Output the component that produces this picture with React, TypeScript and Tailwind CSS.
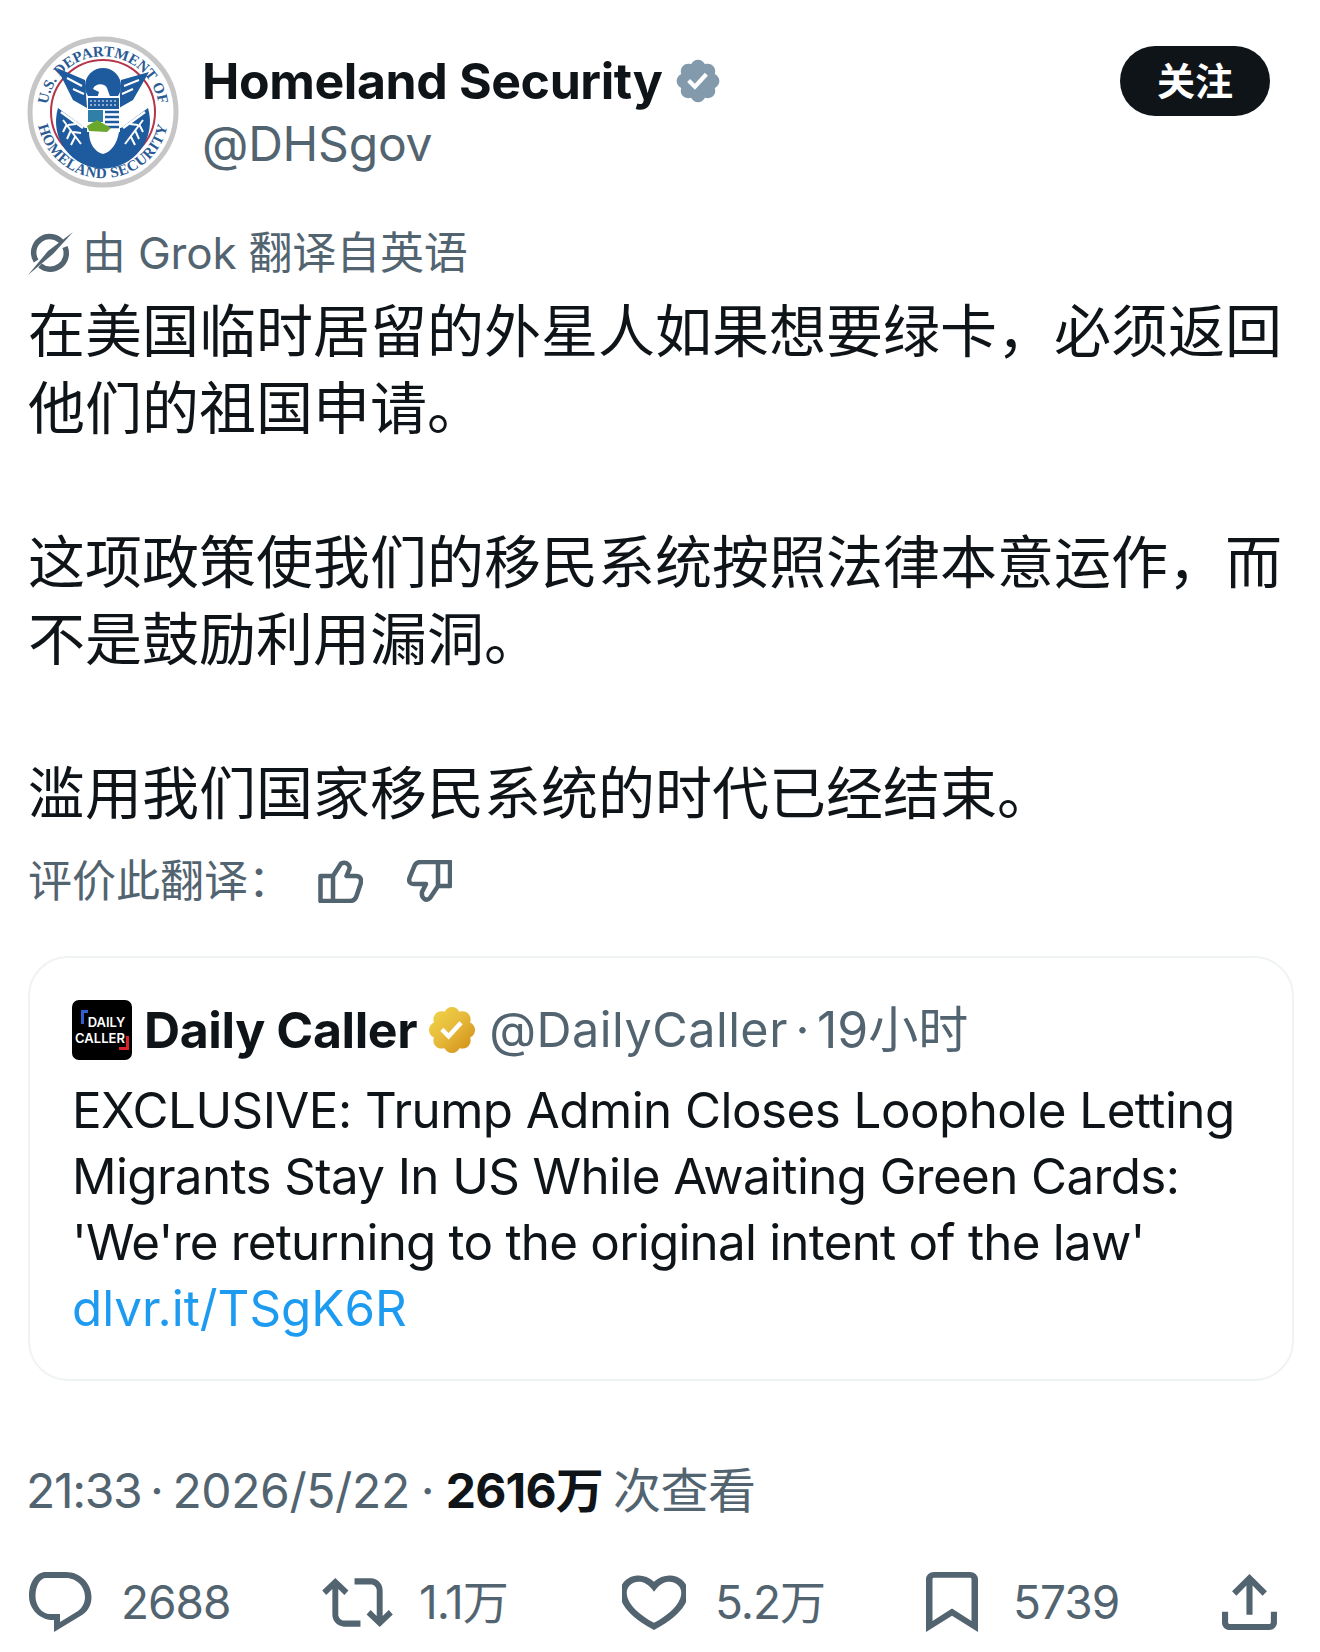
import React from "react";

const sans = "font-['Inter','Noto_Sans_CJK_SC',sans-serif]";

const P = {
  rt: "M4.5 3.88l4.432 4.14-1.364 1.46L5.5 7.55V16c0 1.1.896 2 2 2H13v2H7.5c-2.209 0-4-1.79-4-4V7.55L1.432 9.48.068 8.02 4.5 3.88zM16.5 6H11V4h5.5c2.209 0 4 1.79 4 4v8.45l2.068-1.93 1.364 1.46-4.432 4.14-4.432-4.14 1.364-1.46 2.068 1.93V8c0-1.1-.896-2-2-2z",
  like: "M16.697 5.5c-1.222-.06-2.679.51-3.89 2.16l-.805 1.09-.806-1.09C9.984 6.01 8.526 5.44 7.304 5.5c-1.243.07-2.349.78-2.91 1.91-.552 1.12-.633 2.78.479 4.82 1.074 1.97 3.257 4.27 7.129 6.61 3.87-2.34 6.052-4.64 7.126-6.61 1.111-2.04 1.03-3.7.477-4.82-.561-1.13-1.666-1.84-2.908-1.91zm4.187 7.69c-1.351 2.48-4.001 5.12-8.379 7.67l-.503.3-.504-.3c-4.379-2.55-7.029-5.19-8.382-7.67-1.36-2.5-1.41-4.86-.514-6.67.887-1.79 2.647-2.91 4.601-3.01 1.651-.09 3.368.56 4.798 2.01 1.429-1.45 3.146-2.1 4.796-2.01 1.954.1 3.714 1.22 4.601 3.01.896 1.81.846 4.17-.514 6.67z",
  mark: "M4 4.5C4 3.12 5.119 2 6.5 2h11C18.881 2 20 3.12 20 4.5v18.44l-8-5.71-8 5.71V4.5zM6.5 4c-.276 0-.5.22-.5.5v14.56l6-4.29 6 4.29V4.5c0-.28-.224-.5-.5-.5h-11z",
  share: "M12 2.59l5.7 5.7-1.41 1.42L13 6.41V16h-2V6.41l-3.3 3.3-1.41-1.42L12 2.59zM21 15l-.02 3.51c0 1.38-1.12 2.49-2.5 2.49H5.5C4.11 21 3 19.88 3 18.5V15h2v3.5c0 .28.22.5.5.5h12.98c.28 0 .5-.22.5-.5L19 15h2z",
  badge: "M22.25 12c0-1.43-.88-2.67-2.19-3.34.46-1.39.2-2.9-.81-3.91s-2.52-1.27-3.91-.81c-.66-1.31-1.91-2.19-3.34-2.19s-2.67.88-3.33 2.19c-1.4-.46-2.91-.2-3.92.81s-1.26 2.52-.8 3.91c-1.31.67-2.2 1.91-2.2 3.34s.89 2.67 2.2 3.34c-.46 1.39-.21 2.9.8 3.91s2.52 1.26 3.91.81c.67 1.31 1.91 2.19 3.34 2.19s2.68-.88 3.34-2.19c1.39.45 2.9.2 3.91-.81s1.27-2.52.81-3.91c1.31-.67 2.19-1.91 2.19-3.34zm-11.71 4.2L6.8 12.46l1.41-1.42 2.26 2.26 4.8-5.23 1.47 1.36-6.2 6.77z",
};

function Icon({ d, vb, className }: { d: string; vb: string; className: string }) {
  return (
    <svg viewBox={vb} preserveAspectRatio="none" className={`${className} text-[#536471] shrink-0`} fill="currentColor">
      <path d={d} fillRule="evenodd" />
    </svg>
  );
}

function Seal() {
  const blue = "#1d5a9e";
  return (
    <svg viewBox="0 0 152 152" className="w-[152px] h-[152px] shrink-0 -ml-[1px]">
      <defs>
        <path id="sealTop" d="M 20.5 83.8 A 56 56 0 1 1 131.5 83.8" />
        <path id="sealBot" d="M 10.6 85 A 66 66 0 0 0 141.4 85" />
      </defs>
      <circle cx="76" cy="76" r="73" fill="#fff" stroke="#c6c6c6" strokeWidth="5" />
      <circle cx="76" cy="76" r="52" fill="#fff" stroke="#b5354a" strokeWidth="2" />
      <text fontFamily="'Liberation Serif',serif" fontSize="15" fill="#2a5a94" fontWeight="700">
        <textPath href="#sealTop" startOffset="50%" textAnchor="middle">U.S. DEPARTMENT OF</textPath>
      </text>
      <text fontFamily="'Liberation Serif',serif" fontSize="15" fill="#2a5a94" fontWeight="700">
        <textPath href="#sealBot" startOffset="50%" textAnchor="middle" letterSpacing="0.5">HOMELAND SECURITY</textPath>
      </text>
      <path d="M31 72 L58 92 L94 92 L121 72 A47 47 0 1 1 31 72 Z" fill={blue} />
      <path d="M30 32 L58 44 L60 72 L46 64 Z M122 36 L94 44 L92 72 L106 64 Z" fill={blue} />
      <circle cx="76" cy="50" r="18" fill={blue} />
      <path d="M40 42 L55 50 M46 53 L57 58 M112 44 L97 50 M106 53 L95 58" stroke="#fff" strokeWidth="2" />
      <path d="M66 53 C68 47 78 47 80 52 L85 66 L69 66 L72 56 Z" fill="#fff" />
      <rect x="60" y="60" width="33" height="36" fill="#fff" />
      <rect x="61" y="62" width="31" height="11" fill={blue} />
      <path d="M63 65 H90 M63 69 H90" stroke="#fff" strokeWidth="1" strokeDasharray="2 2" />
      <path d="M61 74 H76 V86 L61 86 Z" fill="#2f7fa8" />
      <path d="M78 76 H92 M78 81 H92 M78 86 H92 M78 91 H92" stroke={blue} strokeWidth="2.5" />
      <path d="M60 90 L70 84 L84 92 L80 96 L62 95 Z" fill="#6aa82c" />
      <path d="M62 96 L92 96 C90 108 84 116 76 118 C68 116 62 108 62 96 Z" fill="#fff" />
      <path d="M36 84 L54 108 M40 88 L36 96 M44 94 L40 103 M48 101 L44 109 M41 89 L49 88 M46 96 L54 97 M116 84 L98 108 M112 88 L116 96 M108 94 L112 103 M104 101 L108 109 M111 89 L103 88" stroke="#fff" strokeWidth="2" />
      <path d="M34 76 L56 92 M118 76 L96 92" stroke="#fff" strokeWidth="2.5" />
    </svg>
  );
}

function GoldBadge() {
  return (
    <svg viewBox="0 0 24 24" className="w-[54px] h-[54px] shrink-0">
      <defs>
        <linearGradient id="gold" x1="0" y1="0" x2="1" y2="1">
          <stop offset="0" stopColor="#f2d84a" />
          <stop offset="0.5" stopColor="#e6b83a" />
          <stop offset="1" stopColor="#cd8a10" />
        </linearGradient>
      </defs>
      <path d={P.badge} fill="url(#gold)" />
    </svg>
  );
}

function Grok() {
  return (
    <svg viewBox="0 0 50 46" className="w-[50px] h-[46px] shrink-0" fill="none" stroke="#536471">
      <path d="M37.3 12.7 A16 16 0 0 0 11.1 31" strokeWidth="5.5" />
      <path d="M15 35.5 A16 16 0 0 0 40 17" strokeWidth="5.5" />
      <path d="M48 2 L28 24 L3 45 L23 21 Z" fill="#536471" stroke="none" />
    </svg>
  );
}

function DailyCaller() {
  return (
    <div className="relative w-[60px] h-[60px] shrink-0 bg-black rounded-[7px] flex flex-col items-center justify-center text-white font-['Inter',sans-serif] font-semibold text-[13px] leading-[16px]">
      <span className="absolute left-[9px] top-[10px] w-[7px] h-[14px] border-l-[3px] border-t-[3px] border-[#2f5fd0]" />
      <span className="absolute right-[3px] bottom-[10px] w-[10px] h-[14px] border-r-[3px] border-b-[3px] border-[#d8232a]" />
      <span className="relative pl-[9px]">DAILY</span>
      <span className="relative pr-[4px]">CALLER</span>
    </div>
  );
}

const numCls = "text-[46px] leading-[60px] text-[#536471] tracking-[-1px]";

export default function App() {
  return (
    <div className={`w-[1320px] h-[1652px] overflow-hidden bg-white text-[#0f1419] ${sans} pl-[28px] pr-[26px] pt-[36px]`}>
      <div className="flex items-start">
        <Seal />
        <div className="ml-[23px] flex-1 pt-[14px]">
          <div className="flex items-center h-[62px]">
            <span className="text-[50px] leading-[62px] font-bold tracking-[-0.4px]">Homeland Security</span>
            <span className="ml-[10px] flex">
              <svg viewBox="0 0 24 24" className="w-[50px] h-[50px] text-[#829aab]" fill="currentColor"><path d={P.badge} /></svg>
            </span>
          </div>
          <div className="text-[48px] leading-[62px] mt-[1px] text-[#536471] tracking-[-0.2px]">@DHSgov</div>
        </div>
        <div className="mt-[10px] mr-[24px] w-[150px] h-[70px] rounded-full bg-[#0f1419] text-white flex items-center justify-center text-[38px] font-bold">关注</div>
      </div>

      <div className="mt-[39px] flex items-center h-[52px] text-[44px] text-[#536471] gap-[7px] -ml-[3px]">
        <Grok />
        <span className="leading-[52px] tracking-[-0.2px]">由 Grok 翻译自英语</span>
      </div>

      <div className="mt-[14px] text-[57px] leading-[77px] whitespace-pre-line">
        {"在美国临时居留的外星人如果想要绿卡，必须返回\n他们的祖国申请。\n\n这项政策使我们的移民系统按照法律本意运作，而\n不是鼓励利用漏洞。\n\n滥用我们国家移民系统的时代已经结束。"}
      </div>

      <div className="mt-[19px] flex items-center h-[60px] text-[#536471]">
        <span className="text-[44px] leading-[60px] w-[290px]">评价此翻译：</span>
        <svg viewBox="0 0 45 43" className="w-[45px] h-[43px]" fill="none" stroke="currentColor" strokeWidth="4.5" strokeLinejoin="round">
          <path d="M2.5 16 H15 V41 H2.5 Z M15 16 L23 3.5 C29 1 33 6 31 10 L28.5 16 H38 C42 16 44 19 42.5 24 L38.5 36 C37.5 39 35 41 32 41 H15" />
        </svg>
        <svg viewBox="0 0 45 43" className="w-[45px] h-[43px] ml-[44px]" fill="none" stroke="currentColor" strokeWidth="4.5" strokeLinejoin="round">
          <path d="M43 2 H31 V26 H43 Z M31 2 H14 C10 2 8 4 7 7 L2.5 18 C1.5 22 3 24 7 24 H19 L15 32 C14 38 19 42 23 38 L31 26" />
        </svg>
      </div>

      <div className="mt-[45px] h-[425px] border-2 border-[#eff3f4] rounded-[40px] pl-[42px] pr-[20px] pt-[42px]">
        <div className="flex items-center h-[60px] whitespace-nowrap">
          <DailyCaller />
          <span className="ml-[12px] text-[50px] font-bold tracking-[-0.4px] leading-[60px]">Daily Caller</span>
          <span className="ml-[8px] flex"><GoldBadge /></span>
          <span className="ml-[10px] text-[48.5px] text-[#536471] leading-[60px] tracking-[0.5px]">@DailyCaller</span>
          <span className="w-[29px] text-center text-[48.5px] text-[#536471] leading-[60px]">·</span>
          <span className="text-[50px] text-[#536471] leading-[60px]">19小时</span>
        </div>
        <div className="mt-[17px] text-[49.3px] leading-[66px] whitespace-nowrap">
          <div className="tracking-[-0.52px]">EXCLUSIVE: Trump Admin Closes Loophole Letting</div>
          <div className="tracking-[-0.6px]">Migrants Stay In US While Awaiting Green Cards:</div>
          <div className="tracking-[-0.75px]">'We're returning to the original intent of the law'</div>
          <div className="text-[#1d9bf0]">dlvr.it/TSgK6R</div>
        </div>
      </div>

      <div className="mt-[80px] -ml-[2px] flex items-center h-[60px] text-[48px] leading-[60px] text-[#536471] whitespace-nowrap">
        <span className="tracking-[-1.3px]">21:33</span>
        <span className="w-[31px] text-center">·</span>
        <span className="tracking-[-0.4px]">2026/5/22</span>
        <span className="w-[36px] text-center">·</span>
        <span className="font-bold text-[#0f1419] tracking-[-0.8px]">2616万</span>
        <span className="ml-[10px] tracking-[-0.5px]">次查看</span>
      </div>

      <div className="mt-[42px] flex items-center h-[78px]">
        <div className="w-[294px] flex items-center">
          <svg viewBox="0 0 63 60" className="ml-[1px] w-[63px] h-[60px] shrink-0 text-[#536471]" fill="currentColor">
            <path fillRule="evenodd" d="M17 0 H37 C51 0 62.5 11 62.5 25 C62.5 33 59 39 53 43 L25 60 V48 H21 C9 46 0 36 0 24 C0 10 7 0 17 0 Z M17 6 C11 6 6.5 14 6.5 24 C6.5 34 13 42 21 42 H31 V50 L49 39 C53 36 56 31 56 25 C56 15 48 6 37 6 Z" />
          </svg>
          <span className={`${numCls} ml-[29px]`}>2688</span>
        </div>
        <div className="w-[300px] flex items-center">
          <Icon d={P.rt} vb="0 3.88 24 16.24" className="w-[71px] h-[49px]" />
          <span className={`${numCls} ml-[26px]`}>1.1万</span>
        </div>
        <div className="w-[304px] flex items-center">
          <Icon d={P.like} vb="2.6 3 18.8 18.2" className="w-[64px] h-[56px]" />
          <span className={`${numCls} ml-[29px]`}>5.2万</span>
        </div>
        <div className="w-[296px] flex items-center">
          <Icon d={P.mark} vb="4 2 16 20.94" className="w-[52px] h-[60px]" />
          <span className={`${numCls} ml-[35px]`}>5739</span>
        </div>
        <Icon d={P.share} vb="3 2.59 18 18.41" className="w-[55px] h-[56px]" />
      </div>
    </div>
  );
}
